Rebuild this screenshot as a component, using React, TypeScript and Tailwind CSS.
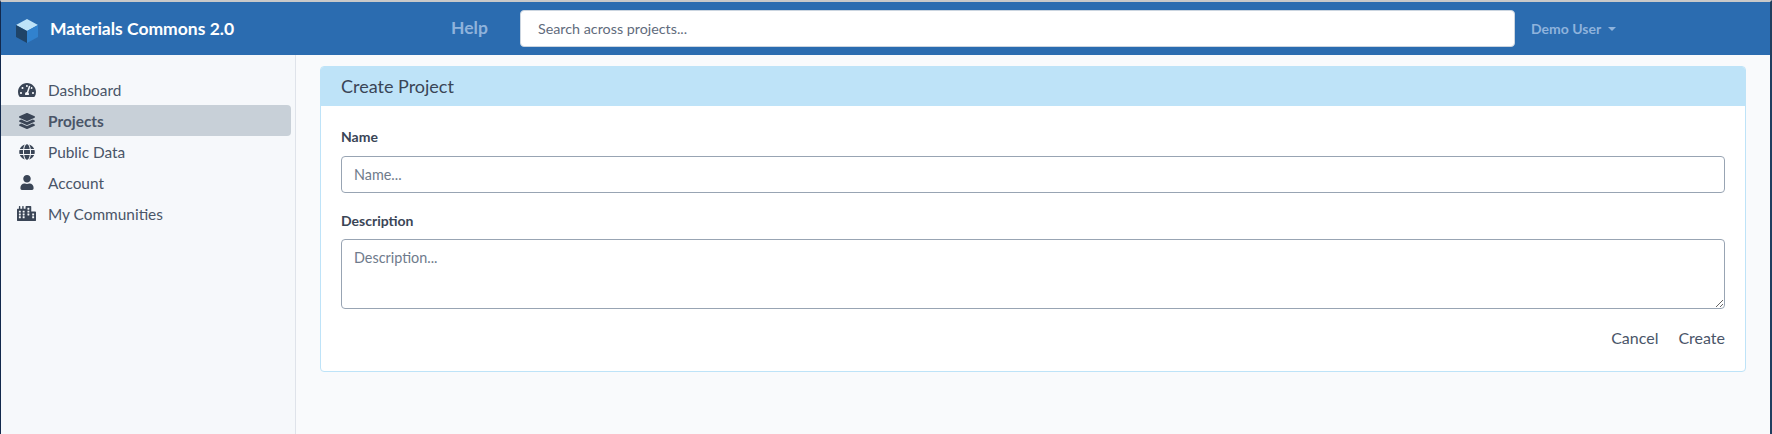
import { FaTachometerAlt, FaLayerGroup, FaGlobe, FaUser, FaCity } from "react-icons/fa";

const items = [
  { label: "Dashboard", Icon: FaTachometerAlt, cls: "w-[18px] h-[18px]" },
  { label: "Projects", Icon: FaLayerGroup, cls: "w-[16px] h-[16px]", active: true },
  { label: "Public Data", Icon: FaGlobe, cls: "w-[16px] h-[16px]" },
  { label: "Account", Icon: FaUser, cls: "w-[14px] h-[15px]" },
  { label: "My Communities", Icon: FaCity, cls: "w-[19px] h-[17px]" },
];

function Cube() {
  return (
    <svg width="22" height="24" viewBox="0 0 22 24" className="shrink-0 mt-[4px]">
      <path d="M11 0 L22 6 L11 12 L0 6 Z" fill="#bee3f8" />
      <path d="M0 6 L11 12 L11 24 L0 18 Z" fill="#1f4468" />
      <path d="M22 6 L11 12 L11 24 L22 18 Z" fill="#3182ce" />
    </svg>
  );
}

export default function App() {
  return (
    <div className="w-[1772px] h-[434px] overflow-hidden flex flex-col bg-[#f9fafc] text-[#3a4556] font-['Lato','Noto_Sans',sans-serif] border-l border-r-2 border-l-[#12294d] border-r-[#1f3f60] border-t-2 border-t-[#c9c9c9]">
      <header className="h-[53px] shrink-0 bg-[#2b6cb0] flex items-center">
        <div className="w-[450px] flex items-center pl-[15px] gap-[12px]">
          <Cube />
          <span className="text-white text-[17.5px] font-bold leading-none">Materials Commons 2.0</span>
        </div>
        <span className="w-[69px] text-[17.5px] font-bold text-[#8fb3dc]">Help</span>
        <div className="w-[995px] h-[37px] bg-white border border-[#cbd5e0] rounded flex items-center pl-[17px] text-[14.3px] text-[#5f6b7c]">
          Search across projects...
        </div>
        <div className="ml-[16px] flex items-center gap-[7px] text-[14px] font-bold text-[#8fb3dc]">
          Demo User
          <span className="w-0 h-0 border-x-[4px] border-x-transparent border-t-[4px] border-t-[#8fb3dc]" />
        </div>
      </header>
      <div className="flex flex-1 min-h-0">
        <aside className="w-[295px] shrink-0 border-r border-[#dfe3ea] bg-[#f6f8fb] pt-[19px] pr-[4px]">
          {items.map(({ label, Icon, cls, active }) => (
            <div key={label} className={`h-[31px] flex items-center rounded-r ${active ? "bg-[#c8d0d8] font-bold" : ""}`}>
              <span className="w-[47px] pr-[1px] flex justify-center shrink-0 pl-[5px] text-[#3a4556]">
                <Icon className={cls} />
              </span>
              <span className="text-[15.4px] pt-[2px] text-[#4a5568]">{label}</span>
            </div>
          ))}
        </aside>
        <main className="flex-1 pl-[24px] pr-[24px] pt-[11px]">
          <section className="h-[306px] border border-[#bee3f8] rounded bg-white overflow-hidden">
            <div className="h-[39px] bg-[#bee3f8] flex items-center pl-[20px] text-[18px] text-[#3a4556]">Create Project</div>
            <div className="px-[20px] pt-[21px]">
              <label className="block text-[14px] leading-[20px] font-bold">Name</label>
              <div className="mt-[9px] h-[37px] border border-[#98a4b3] rounded flex items-center pl-[12px] text-[14.4px] text-[#6f7b8c]">Name...</div>
              <label className="block mt-[18px] text-[14px] leading-[20px] font-bold">Description</label>
              <textarea
                readOnly
                placeholder="Description..."
                className="block mt-[8px] w-full h-[70px] border border-[#98a4b3] rounded px-[12px] py-[9px] text-[14.4px] leading-[18px] placeholder:text-[#6f7b8c] outline-none"
              />
              <div className="mt-[18px] flex justify-end gap-[20px] text-[16px] leading-[22px] text-[#4a5568]">
                <span>Cancel</span>
                <span>Create</span>
              </div>
            </div>
          </section>
        </main>
      </div>
    </div>
  );
}
